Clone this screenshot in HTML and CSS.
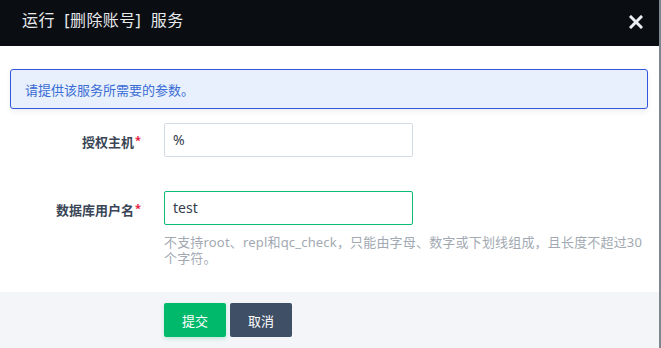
FILE: index.html
```html
<!DOCTYPE html>
<html lang="zh">
<head>
<meta charset="utf-8">
<title>运行 [删除账号] 服务</title>
<link rel="stylesheet" href="styles.css">
</head>
<body>
<div class="modal">
  <div class="header">
    <div class="title">运行 [删除账号] 服务</div>
    <svg class="close" width="14" height="14" viewBox="0 0 14 14"><path d="M2 2 L12 12 M12 2 L2 12" stroke="#eceef1" stroke-width="3" stroke-linecap="square"/></svg>
  </div>
  <div class="content">
    <div class="alert">请提供该服务所需要的参数。</div>
    <div class="form">
      <div class="row">
        <label class="label">授权主机<span class="req">*</span></label>
        <div class="control"><div class="input">%</div></div>
      </div>
      <div class="row row2">
        <label class="label">数据库用户名<span class="req">*</span></label>
        <div class="control">
          <div class="input focus">test</div>
          <div class="help">不支持root、repl和qc_check，只能由字母、数字或下划线组成，且长度不超过30个字符。</div>
        </div>
      </div>
    </div>
  </div>
  <div class="footer">
    <button class="btn primary">提交</button>
    <button class="btn secondary">取消</button>
  </div>
</div>
</body>
</html>
```
FILE: styles.css
```css
html, body {
  margin: 0;
  padding: 0;
}
body {
  background: #7e868f;
  font-family: "Noto Sans", "Noto Sans CJK SC", sans-serif;
  width: 661px;
  height: 348px;
  overflow: hidden;
}
.modal {
  width: 659px;
  height: 348px;
  background: #ffffff;
  display: flex;
  flex-direction: column;
}
.header {
  height: 46px;
  flex: none;
  background: #0a0e13;
  display: flex;
  align-items: center;
  justify-content: space-between;
  padding: 0 16px 0 22px;
  box-sizing: border-box;
}
.title {
  color: #e8e9eb;
  font-size: 16px;
  line-height: 20px;
  margin-top: -7px;
  word-spacing: 5px;
  letter-spacing: 0.4px;
}
.close {
  display: block;
  margin-top: -2px;
}
.content {
  padding: 23px 11px 0 10px;
}
.alert {
  height: 40px;
  box-sizing: border-box;
  border: 1px solid #3356dc;
  border-radius: 3px;
  background: #e7f0fc;
  color: #3a6cd5;
  font-size: 13px;
  display: flex;
  align-items: center;
  padding-left: 14px;
  box-shadow: 0 3px 5px rgba(40, 60, 90, 0.08);
}
.form {
  margin-top: 14px;
  display: flex;
  flex-direction: column;
  gap: 34px;
}
.row {
  display: grid;
  grid-template-columns: 131px 485px;
  column-gap: 23px;
  align-items: start;
}
.label {
  text-align: right;
  font-size: 13px;
  font-weight: 700;
  color: #3a4656;
  line-height: 34px;
  height: 34px;
}
.req {
  color: #e3223f;
  font-size: 11px;
  vertical-align: 3px;
  margin-left: 1px;
}
.input {
  width: 249px;
  height: 34px;
  box-sizing: border-box;
  border: 1px solid #d3dbe5;
  border-radius: 2px;
  padding: 0 8px;
  font-size: 14px;
  line-height: 32px;
  color: #36404c;
  background: #fff;
}
.input.focus {
  border-color: #0cbc74;
}
.help {
  margin-top: 9px;
  font-size: 13px;
  line-height: 16px;
  color: #a2a9b2;
  letter-spacing: 0.18px;
}
.footer {
  margin-top: auto;
  height: 56px;
  box-sizing: border-box;
  background: #f3f5f9;
  padding: 11px 0 0 164px;
  display: flex;
  gap: 4px;
  align-items: flex-start;
}
.btn {
  width: 62px;
  height: 34px;
  border: none;
  border-radius: 2px;
  font-family: "Noto Sans", "Noto Sans CJK SC", sans-serif;
  font-size: 13px;
  color: #ffffff;
  padding: 0;
}
.btn.primary {
  background: #00b96b;
  box-shadow: 0 2px 4px rgba(0, 185, 107, 0.2);
}
.btn.secondary {
  background: #3f4f66;
}
```
